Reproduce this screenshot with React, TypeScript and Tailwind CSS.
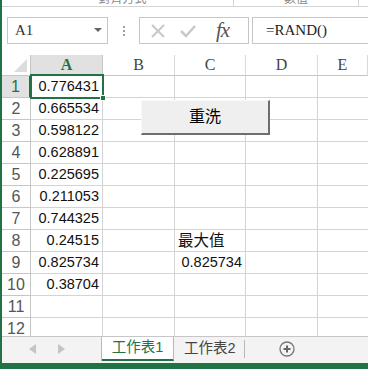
import React from 'react';

const values: (string | null)[] = [
  '0.776431', '0.665534', '0.598122', '0.628891', '0.225695', '0.211053',
  '0.744325', '0.24515', '0.825734', '0.38704', null, null,
];

const cols = ['A', 'B', 'C', 'D', 'E'];

const App: React.FC = () => {
  return (
    <div className="relative w-[368px] h-[369px] overflow-hidden bg-white border-l-2 border-[#217346] flex flex-col font-['Liberation_Sans','Noto_Sans_CJK_TC',sans-serif]">
      {/* ribbon remnant */}
      <div className="h-[7px] shrink-0 border-b border-[#d4d4d4] relative overflow-hidden flex">
        <div className="w-[232px] border-r border-[#d4d4d4] flex justify-center pl-[10px]">
          <span className="text-[12px] leading-none -mt-[7px] text-[#8a8a8a]">對齊方式</span>
        </div>
        <div className="w-[125px] border-r border-[#d4d4d4] flex justify-center">
          <span className="text-[12px] leading-none -mt-[7px] text-[#8a8a8a]">數值</span>
        </div>
      </div>

      {/* formula bar */}
      <div className="h-[48px] shrink-0 flex items-start pt-[10px] pl-[5px]">
        <div className="w-[101px] h-[27px] border border-[#c6c6c6] flex items-center pl-[7px] pr-[5px]">
          <span className="flex-1 text-[15px] text-[#333] font-['Liberation_Serif',serif]">A1</span>
          <svg width="8" height="5" viewBox="0 0 8 5"><path d="M0 0h8L4 4z" fill="#666" /></svg>
        </div>
        <div className="w-[31px] h-[27px] flex flex-col items-center justify-center gap-[2px]">
          <div className="w-[2px] h-[2px] bg-[#a0a0a0]" />
          <div className="w-[2px] h-[2px] bg-[#a0a0a0]" />
          <div className="w-[2px] h-[2px] bg-[#a0a0a0]" />
        </div>
        <div className="w-[110px] h-[27px] border border-[#c6c6c6] flex items-center pl-[10px]">
          <svg width="16" height="16" viewBox="0 0 16 16" className="mr-[14px]">
            <path d="M2 2L14 14M14 2L2 14" stroke="#c8c8c8" strokeWidth="2" />
          </svg>
          <svg width="16" height="14" viewBox="0 0 16 14" className="mr-[20px]">
            <path d="M1 7L6 12L15 2" stroke="#c8c8c8" strokeWidth="2.5" fill="none" />
          </svg>
          <span className="text-[21px] italic text-[#555] font-['Liberation_Serif',serif] leading-none tracking-[-1px]">fx</span>
        </div>
        <div className="ml-[3px] flex-1 h-[27px] border border-r-0 border-[#c6c6c6] flex items-center pl-[13px]">
          <span className="text-[15px] text-[#222] font-['Liberation_Serif',serif]">=RAND()</span>
        </div>
      </div>

      {/* sheet grid */}
      <div className="relative flex-1 overflow-hidden">
        <div className="grid grid-cols-[29px_72px_72px_71px_72px_1fr] grid-rows-[21px] auto-rows-[22px]">
          {/* header row */}
          <div className="border-r border-b border-[#c6c6c6] flex items-end justify-end pr-[3px] pb-[3px]">
            <svg width="13" height="13" viewBox="0 0 13 13"><path d="M13 0V13H0z" fill="#dcdcdc" /></svg>
          </div>
          {cols.map((c, i) => (
            <div
              key={c}
              className={
                i === 0
                  ? 'bg-[#e1e1e1] border-r border-b-2 border-[#c6c6c6] border-b-[#217346] flex items-center justify-center text-[16px] font-bold text-[#217346] font-[\'Liberation_Serif\',serif]'
                  : 'border-r border-b border-[#dadada] border-b-[#c6c6c6] flex items-center justify-center text-[16px] text-[#444] font-[\'Liberation_Serif\',serif]'
              }
            >
              {c}
            </div>
          ))}

          {values.map((v, r) => (
            <React.Fragment key={r}>
              <div
                className={
                  r === 0
                    ? 'bg-[#e1e1e1] border-r-2 border-b border-[#c6c6c6] border-r-[#217346] flex items-center justify-center text-[16px] text-[#217346]'
                    : 'border-r border-b border-[#c6c6c6] flex items-center justify-center text-[16px] text-[#555]'
                }
              >
                {r + 1}
              </div>
              <div className="border-r border-b border-[#d4d4d4] flex items-center justify-end pr-[3px] text-[14.5px] text-[#111]">
                {v}
              </div>
              <div className="border-r border-b border-[#d4d4d4]" />
              <div className="border-r border-b border-[#d4d4d4] flex items-center px-[3px] text-[14.5px] text-[#111]">
                {r === 7 && <span className="w-full text-[15.5px]">最大值</span>}
                {r === 8 && <span className="w-full text-right">0.825734</span>}
              </div>
              <div className="border-r border-b border-[#d4d4d4]" />
              <div className="border-b border-[#d4d4d4]" />
            </React.Fragment>
          ))}
        </div>

        {/* active cell selection */}
        <div className="absolute left-[28px] top-[19px] w-[74px] h-[25px] border-2 border-[#217346] pointer-events-none" />
        <div className="absolute left-[98px] top-[40px] w-[6px] h-[6px] bg-[#217346] border border-white" />

        {/* form button */}
        <button className="absolute left-[139px] top-[45px] w-[129px] h-[35px] bg-[#efefef] border-t border-l border-[#f8f8f8] border-r-2 border-b-2 border-r-[#6e6e6e] border-b-[#6e6e6e] text-[16px] text-black flex items-center justify-center">
          重洗
        </button>
      </div>

      {/* sheet tabs */}
      <div className="h-[27px] shrink-0 bg-[#f3f3f3] border-t border-[#c6c6c6] flex items-start">
        <div className="w-[100px] h-[24px] border-r border-[#b8b8b8] flex items-center pl-[27px] gap-[22px]">
          <svg width="7" height="10" viewBox="0 0 7 10"><path d="M7 0V10L0 5z" fill="#c4c4c4" /></svg>
          <svg width="7" height="10" viewBox="0 0 7 10"><path d="M0 0V10L7 5z" fill="#c4c4c4" /></svg>
        </div>
        <div className="w-[72px] h-[24px] bg-white border-r border-[#b8b8b8] border-b-2 border-b-[#217346] flex items-center justify-center text-[14.5px] text-[#217346]">
          工作表1
        </div>
        <div className="w-[70px] h-[24px] flex items-center pl-[10px] text-[14.5px] text-[#444]">
          工作表2
        </div>
        <div className="w-px h-[18px] mt-[3px] bg-[#b8b8b8]" />
        <div className="ml-[34px] h-[24px] flex items-center">
          <svg width="16" height="16" viewBox="0 0 16 16">
            <circle cx="8" cy="8" r="7" fill="none" stroke="#777" strokeWidth="1.3" />
            <path d="M8 4.5V11.5M4.5 8H11.5" stroke="#666" strokeWidth="2" />
          </svg>
        </div>
      </div>
      <div className="h-[6px] shrink-0 bg-[#217346]" />
    </div>
  );
};

export default App;
